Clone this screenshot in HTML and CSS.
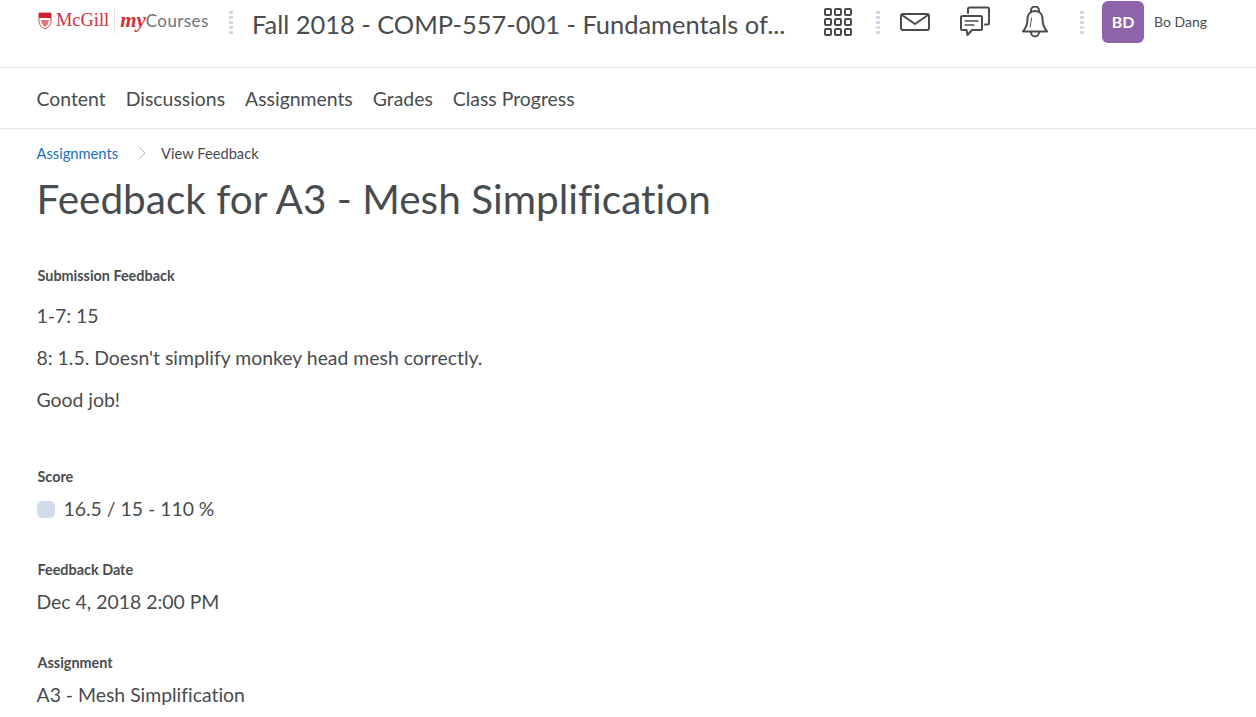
FILE: index.html
```html
<!DOCTYPE html>
<html lang="en">
    <head>
        <meta charset="UTF-8">
        <title>Feedback for A3 - Mesh Simplification</title>
        <link rel="stylesheet" href="styles.css">
    </head>
    <body>
        <header class="topbar">
            <div class="logo">
                <svg class="crest" width="14" height="18" viewBox="0 0 14 18">
                    <path d="M1 1h12v8c0 4-3 6.500-6 8-3-1.500-6-4-6-8z" fill="#fff" stroke="#d9444c" stroke-width="1"/>
                    <path d="M1 1h12v5H1z" fill="#d3202e"/>
                    <path d="M3 8h8l-1 4-3 3-3-3z" fill="#e0727a"/>
                </svg>
                <span class="logo-mcgill">McGill</span>
                <span class="logo-rule"></span>
                <span class="logo-my">my</span><span class="logo-courses">Courses</span>
            </div>
            <span class="dots dots-logo"></span>
            <div class="course-title">Fall 2018 - COMP-557-001 - Fundamentals of...</div>
            <svg class="icon icon-grid" width="30" height="30" viewBox="0 0 30 30" fill="none" stroke="#494c4e" stroke-width="2">
                <rect x="2" y="2" width="6" height="6" rx="1"/><rect x="12" y="2" width="6" height="6" rx="1"/><rect x="22" y="2" width="6" height="6" rx="1"/>
                <rect x="2" y="12" width="6" height="6" rx="1"/><rect x="12" y="12" width="6" height="6" rx="1"/><rect x="22" y="12" width="6" height="6" rx="1"/>
                <rect x="2" y="22" width="6" height="6" rx="1"/><rect x="12" y="22" width="6" height="6" rx="1"/><rect x="22" y="22" width="6" height="6" rx="1"/>
            </svg>
            <span class="dots dots-grid"></span>
            <svg class="icon icon-mail" width="32" height="20" viewBox="0 0 32 20" fill="none" stroke="#494c4e" stroke-width="2" stroke-linejoin="round">
                <rect x="2" y="2" width="28" height="16" rx="2"/>
                <path d="M3 3l13 9 13-9"/>
            </svg>
            <svg class="icon icon-chat" width="32" height="32" viewBox="0 0 32 32" fill="none" stroke="#494c4e" stroke-width="2" stroke-linejoin="round" stroke-linecap="round">
                <path d="M9 7V3a1.500 1.500 0 0 1 1.500-1.500h18A1.500 1.500 0 0 1 30 3v14a1.500 1.500 0 0 1-1.500 1.500H26"/>
                <path d="M3.500 10h18a1.500 1.500 0 0 1 1.500 1.500v11a1.500 1.500 0 0 1-1.500 1.500H13l-4.500 5-1-5h-4A1.500 1.500 0 0 1 2 22.500v-11A1.500 1.500 0 0 1 3.500 10z"/>
                <path d="M6 15h13M6 19h9" stroke-width="1.300"/>
            </svg>
            <svg class="icon icon-bell" width="28" height="32" viewBox="0 0 28 32" fill="none" stroke="#494c4e" stroke-width="2" stroke-linejoin="round" stroke-linecap="round">
                <path d="M10 6V4.500a4 4 0 0 1 8 0V6"/>
                <path d="M14 5c-5 0-7.500 3.500-7.500 8 0 6-1.500 9-4.500 12.500h24C23 22 21.500 19 21.500 13c0-4.500-2.500-8-7.500-8z"/>
                <path d="M10 26c0 3 2 4.500 4 4.500s4-1.500 4-4.500"/>
                <path d="M10.500 12c-.5 3-.5 6-1.500 9" stroke-width="1"/>
            </svg>
            <span class="dots dots-user"></span>
            <div class="avatar">BD</div>
            <div class="username">Bo Dang</div>
        </header>

        <nav class="navbar">
            <a>Content</a>
            <a>Discussions</a>
            <a>Assignments</a>
            <a>Grades</a>
            <a>Class Progress</a>
        </nav>

        <main class="content">
            <div class="crumbs">
                <a class="crumb-link">Assignments</a>
                <svg class="crumb-sep" width="8" height="14" viewBox="0 0 8 14" fill="none" stroke="#b5babe" stroke-width="1">
                    <path d="M1 1l6 6-6 6"/>
                </svg>
                <span>View Feedback</span>
            </div>
            <h1>Feedback for A3 - Mesh Simplification</h1>

            <section class="block block-feedback">
                <h2>Submission Feedback</h2>
                <p>1-7: 15</p>
                <p>8: 1.5. Doesn't simplify monkey head mesh correctly.</p>
                <p>Good job!</p>
            </section>

            <section class="block block-score">
                <h2>Score</h2>
                <div class="value score"><span class="swatch"></span>16.5 / 15 - 110 %</div>
            </section>

            <section class="block">
                <h2>Feedback Date</h2>
                <div class="value">Dec 4, 2018 2:00 PM</div>
            </section>

            <section class="block">
                <h2>Assignment</h2>
                <div class="value">A3 - Mesh Simplification</div>
            </section>
        </main>
    </body>
</html>
```

FILE: styles.css
```css
html, body {
    height: 717px;
    overflow: hidden;
}

body {
    margin: 0;
    background-color: white;
    color: #494c4e;
    font-family: Lato, "Open Sans", sans-serif;
    font-variant-ligatures: none;
}

.topbar {
    display: flex;
    align-items: center;
    box-sizing: border-box;
    height: 68px;
    padding-left: 38px;
    padding-bottom: 24px;
    border-bottom: 1px solid #e6eaf0;
}

.logo {
    display: flex;
    align-items: center;
    width: 172px;
    margin-bottom: 2px;
}

.crest {
    margin-right: 4px;
}

.logo-mcgill {
    font-family: "Liberation Serif", serif;
    font-size: 18.400px;
    color: #d3303a;
}

.logo-rule {
    width: 1px;
    height: 26px;
    margin: 0 5px;
    background-color: #e6e6e6;
}

.logo-my {
    font-family: "Liberation Serif", serif;
    font-style: italic;
    font-weight: bold;
    font-size: 21px;
    color: #d3303a;
}

.logo-courses {
    font-size: 17px;
    color: #6e7376;
    letter-spacing: .4px;
}

.dots {
    width: 4px;
    height: 24px;
    background-image: radial-gradient(circle, #d3d9e3 1.8px, transparent 2px);
    background-size: 4px 5px;
}

.dots-logo {
    margin-left: 19px;
}

.course-title {
    width: 540px;
    margin-left: 19px;
    margin-top: 4px;
    font-size: 25.450px;
    white-space: nowrap;
}

.icon {
    flex: none;
}

.icon-grid {
    margin-left: 31px;
}

.dots-grid {
    margin-left: 23px;
}

.icon-mail {
    margin-left: 19px;
}

.icon-chat {
    margin-left: 28px;
}

.icon-bell {
    margin-left: 30px;
}

.dots-user {
    margin-left: 31px;
}

.avatar {
    display: flex;
    align-items: center;
    justify-content: center;
    width: 42px;
    height: 42px;
    margin-left: 18px;
    border-radius: 6px;
    background-color: #8f63a9;
    color: white;
    font-size: 16px;
    font-weight: bold;
}

.username {
    margin-left: 10px;
    font-size: 14px;
}

.navbar {
    display: flex;
    gap: 20px;
    align-items: center;
    height: 60px;
    padding-left: 36.500px;
    border-bottom: 1px solid #e6eaf0;
    box-shadow: 0 2px 3px rgba(0, 0, 0, .02);
    font-size: 19.400px;
}

.content {
    padding-left: 36.500px;
}

.crumbs {
    display: flex;
    align-items: center;
    height: 20px;
    margin-top: 14px;
    font-size: 14.700px;
}

.crumb-link {
    color: #1c6fbd;
}

.crumb-sep {
    margin: 0 15px 0 20px;
}

h1 {
    margin: 13px 0 0;
    font-size: 40.500px;
    line-height: 46px;
    font-weight: normal;
}

.block {
    margin-top: 40px;
}

.block h2 {
    margin: 0 0 0 1px;
    font-size: 14.400px;
    line-height: 20px;
    font-weight: bold;
}

.block p {
    margin: 0 0 20px;
    font-size: 19.400px;
    line-height: 22px;
}

.block-feedback {
    margin-top: 44px;
}

.block-feedback h2 {
    margin-bottom: 19px;
}

.block-score {
    margin-top: 56px;
}

.value {
    margin-top: 11px;
    font-size: 19.400px;
    line-height: 22px;
}

.score {
    display: flex;
    align-items: center;
}

.swatch {
    width: 18px;
    height: 17px;
    margin-right: 9px;
    border-radius: 5px;
    background-color: #d3dcea;
}
```
